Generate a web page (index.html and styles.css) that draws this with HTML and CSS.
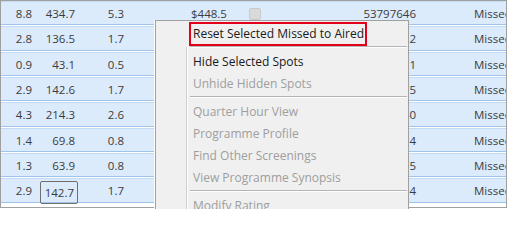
FILE: index.html
```html
<!DOCTYPE html>
<html>
<head>
<meta charset="utf-8">
<link rel="stylesheet" href="styles.css">
</head>
<body>
<div class="stage">
  <div class="grid">
    <div class="row"><div class="c1">8.8</div><div class="c2">434.7</div><div class="c3">5.3</div><div class="c4">$448.5</div><div class="c5"><span class="chk"></span></div><div class="c6">53797646</div><div class="c7">Missed</div></div>
    <div class="row"><div class="c1">2.8</div><div class="c2">136.5</div><div class="c3">1.7</div><div class="c4"></div><div class="c5"></div><div class="c6">32</div><div class="c7">Missed</div></div>
    <div class="row"><div class="c1">0.9</div><div class="c2">43.1</div><div class="c3">0.5</div><div class="c4"></div><div class="c5"></div><div class="c6">31</div><div class="c7">Missed</div></div>
    <div class="row"><div class="c1">2.9</div><div class="c2">142.6</div><div class="c3">1.7</div><div class="c4"></div><div class="c5"></div><div class="c6">75</div><div class="c7">Missed</div></div>
    <div class="row"><div class="c1">4.3</div><div class="c2">214.3</div><div class="c3">2.6</div><div class="c4"></div><div class="c5"></div><div class="c6">40</div><div class="c7">Missed</div></div>
    <div class="row"><div class="c1">1.4</div><div class="c2">69.8</div><div class="c3">0.8</div><div class="c4"></div><div class="c5"></div><div class="c6">34</div><div class="c7">Missed</div></div>
    <div class="row"><div class="c1">1.3</div><div class="c2">63.9</div><div class="c3">0.8</div><div class="c4"></div><div class="c5"></div><div class="c6">05</div><div class="c7">Missed</div></div>
    <div class="row"><div class="c1">2.9</div><div class="c2"><div class="focus">142.7</div></div><div class="c3">1.7</div><div class="c4"></div><div class="c5"></div><div class="c6">34</div><div class="c7">Missed</div></div>
  </div>
  <div class="menu">
    <div class="gutter"></div>
    <div class="item marked">Reset Selected Missed to Aired</div>
    <div class="sep"></div>
    <div class="item">Hide Selected Spots</div>
    <div class="item off">Unhide Hidden Spots</div>
    <div class="sep"></div>
    <div class="item off">Quarter Hour View</div>
    <div class="item off">Programme Profile</div>
    <div class="item off">Find Other Screenings</div>
    <div class="item off">View Programme Synopsis</div>
    <div class="sep"></div>
    <div class="item off">Modify Rating</div>
  </div>
</div>
</body>
</html>
```

FILE: styles.css
```css
html, body {
  margin: 0;
  padding: 0;
  background: #ffffff;
}
body {
  width: 509px;
  height: 209px;
  overflow: hidden;
  font-family: "Open Sans", "Noto Sans", sans-serif;
  font-size: 11.5px;
}
.stage {
  position: relative;
  width: 509px;
  height: 209px;
  overflow: hidden;
}
.grid {
  width: 507px;
  height: 208px;
  box-sizing: border-box;
  border: 1px solid #a0a0a0;
  overflow: hidden;
  display: flex;
  flex-direction: column;
}
.row {
  flex: none;
  display: grid;
  grid-template-columns: 32px 45px 47px 120px 25px 147px 1fr;
  height: 24.333px;
  box-sizing: border-box;
  margin-bottom: 1px;
  background: #dcebfc;
  border-top: 1px solid #c3daf5;
  border-bottom: 1px solid #9fc4ec;
  color: #3b3b3b;
  line-height: 22.333px;
  white-space: nowrap;
}
.row > div { padding-top: 1px; box-sizing: border-box; }
.c1, .c2, .c3, .c6 { text-align: right; }
.c1 { padding-right: 1px; }
.c2 { padding-right: 3px; }
.c3 { padding-right: 1px; }
.c4 { padding-left: 66px; }
.row > .c5 { display: flex; align-items: center; padding-left: 4px; padding-top: 0; }
.c6 { padding-right: 1px; }
.c7 { padding-left: 57px; overflow: hidden; }
.chk {
  width: 12px;
  height: 12px;
  box-sizing: border-box;
  background: #dadada;
  border: 1px solid #c9c9c9;
  border-radius: 2px;
  margin-top: 1px;
}
.row > .c2.c2 { padding-top: 1px; }
.c2 .focus {
  margin: 1px -3px -2px 7px;
  height: 23px;
  box-sizing: border-box;
  border: 1px solid #6f6f6f;
  border-radius: 2px;
  padding-right: 3px;
  line-height: 21px;
}
.menu {
  position: absolute;
  left: 155px;
  top: 20px;
  width: 254px;
  height: 230px;
  box-sizing: border-box;
  background: #f0f0f0;
  border: 1px solid #a0a0a0;
  box-shadow: -1px 0 0 #ffffff;
  padding-top: 1px;
  font-size: 12px;
}
.gutter {
  position: absolute;
  left: 30px;
  top: 26px;
  bottom: 0;
  width: 1px;
  background: #cfcfcf;
  border-right: 1px solid #ffffff;
}
.item {
  position: relative;
  height: 22px;
  line-height: 22px;
  padding-left: 37px;
  padding-top: 1px;
  box-sizing: border-box;
  color: #1a1a1a;
  white-space: nowrap;
}
.item.off { color: #9e9e9e; }
.item.marked::after {
  content: "";
  position: absolute;
  left: 33px;
  top: 0;
  width: 178px;
  height: 24px;
  box-sizing: border-box;
  border: 2px solid #e2001a;
}
.sep {
  position: relative;
  height: 6px;
}
.sep::before {
  content: "";
  position: absolute;
  left: 34px;
  right: 1px;
  top: 2px;
  height: 1px;
  background: #b4b4b4;
  border-bottom: 1px solid #ffffff;
}
```
